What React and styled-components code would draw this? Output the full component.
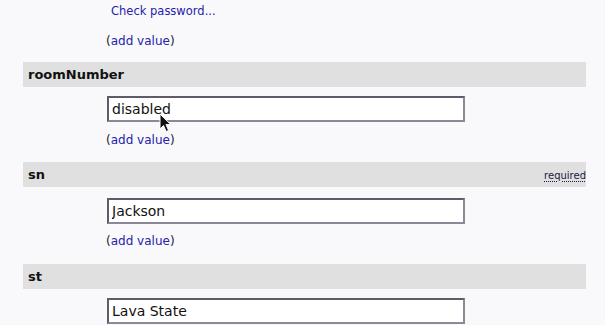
import React from 'react';
import styled, { createGlobalStyle } from 'styled-components';

const Global = createGlobalStyle`
  html, body {
    margin: 0;
    padding: 0;
    background: #f9f9fc;
    font-family: "DejaVu Sans", Verdana, sans-serif;
    color: #111;
  }
`;

const Page = styled.div`
  padding: 0 19px 0 23px;
  width: 605px;
  box-sizing: border-box;
`;

const Values = styled.div`
  padding-left: 84px;
  display: flex;
  flex-direction: column;
  align-items: flex-start;
`;

const CheckLink = styled.a`
  font-size: 11.5px;
  line-height: 14px;
  color: #2422a8;
  text-decoration: none;
  margin: 4px 0 0 4px;
`;

const AddValue = styled.div`
  font-size: 12px;
  line-height: 17px;
  color: #222;
  margin-top: ${(p) => p.top}px;
  margin-left: -1px;
  a {
    color: #2422a8;
    text-decoration: none;
  }
`;

const Header = styled.div`
  display: flex;
  align-items: center;
  justify-content: space-between;
  height: 25px;
  background: #e0e0e0;
  padding: 0 0 0 5px;
  margin-top: ${(p) => p.top}px;
`;

const Label = styled.span`
  font-weight: bold;
  font-size: 13px;
  color: #111;
`;

const Required = styled.abbr`
  font-size: 10px;
  color: #1a1a40;
  text-decoration: underline dotted;
  text-underline-offset: 2px;
  margin-top: 1px;
`;

const Field = styled.div`
  position: relative;
  margin-top: ${(p) => p.top}px;
`;

const Input = styled.input`
  box-sizing: border-box;
  width: 358px;
  height: 26px;
  padding: 0 3px 0 3px;
  font-family: "DejaVu Sans", Verdana, sans-serif;
  font-size: 14px;
  color: #111;
  background: #fff;
  border: 2px solid;
  border-color: #5e5c68 #8c8898 #8c8898 #5e5c68;
  outline: none;
`;

const Cursor = styled.svg`
  position: absolute;
  left: 52px;
  top: 17px;
  width: 13px;
  height: 20px;
`;

const Section = ({ name, value, required, cursor, top, fieldTop, addTop }) => (
  <>
    <Header top={top}>
      <Label>{name}</Label>
      {required && <Required title="required">required</Required>}
    </Header>
    <Values>
      <Field top={fieldTop}>
        <Input defaultValue={value} />
        {cursor && (
          <Cursor viewBox="0 0 13 20">
            <path
              d="M1 1 L1 16 L4.5 12.5 L7.2 18.5 L9.6 17.4 L7 11.6 L11.8 11.6 Z"
              fill="#111"
              stroke="#fff"
              strokeWidth="1"
              strokeLinejoin="round"
            />
          </Cursor>
        )}
      </Field>
      {addTop !== undefined && (
        <AddValue top={addTop}>
          (<a href="#">add value</a>)
        </AddValue>
      )}
    </Values>
  </>
);

export default function App() {
  return (
    <Page>
      <Global />
      <Values>
        <CheckLink href="#">Check password...</CheckLink>
        <AddValue top={15}>
          (<a href="#">add value</a>)
        </AddValue>
      </Values>
      <Section name="roomNumber" value="disabled" cursor top={12} fieldTop={9} addTop={10} />
      <Section name="sn" value="Jackson" required top={13} fieldTop={11} addTop={9} />
      <Section name="st" value="Lava State" top={14} fieldTop={9} />
    </Page>
  );
}
